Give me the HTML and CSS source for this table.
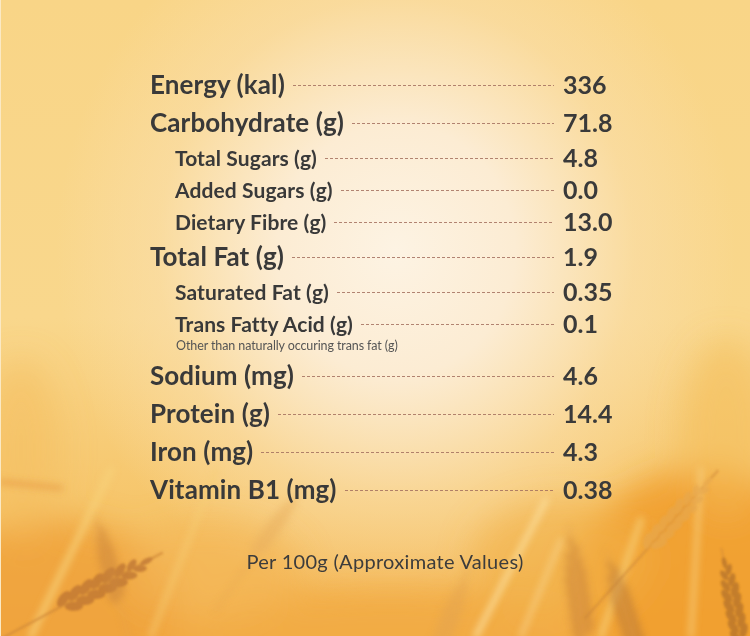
FILE: index.html
```html
<!DOCTYPE html>
<html lang="en">
<head>
<meta charset="utf-8">
<title>Nutrition Facts</title>
<link rel="stylesheet" href="styles.css">
</head>
<body>
<div class="panel">
  <svg class="wheat" viewBox="0 0 750 636" width="750" height="636" aria-hidden="true">
    <defs>
      <filter id="b1" x="-50%" y="-50%" width="200%" height="200%"><feGaussianBlur stdDeviation="1.3"/></filter>
      <filter id="b2" x="-50%" y="-50%" width="200%" height="200%"><feGaussianBlur stdDeviation="3.5"/></filter>
      <filter id="b3" x="-50%" y="-50%" width="200%" height="200%"><feGaussianBlur stdDeviation="16"/></filter>
      <g id="ear">
        <line x1="0" y1="80" x2="0" y2="-110" stroke="currentColor" stroke-width="2"/>
        <ellipse cx="-5" cy="-15" rx="4" ry="8" transform="rotate(-25 -5 -15)"/>
        <ellipse cx="5" cy="-20" rx="4" ry="8" transform="rotate(25 5 -20)"/>
        <ellipse cx="-5" cy="-26" rx="4" ry="8" transform="rotate(-25 -5 -26)"/>
        <ellipse cx="5" cy="-31" rx="4" ry="8" transform="rotate(25 5 -31)"/>
        <ellipse cx="-5" cy="-37" rx="4" ry="8" transform="rotate(-25 -5 -37)"/>
        <ellipse cx="5" cy="-42" rx="4" ry="8" transform="rotate(25 5 -42)"/>
        <ellipse cx="-5" cy="-48" rx="4" ry="8" transform="rotate(-25 -5 -48)"/>
        <ellipse cx="5" cy="-53" rx="4" ry="8" transform="rotate(25 5 -53)"/>
        <ellipse cx="-5" cy="-59" rx="4" ry="8" transform="rotate(-25 -5 -59)"/>
        <ellipse cx="5" cy="-64" rx="4" ry="8" transform="rotate(25 5 -64)"/>
        <ellipse cx="-4" cy="-70" rx="3.5" ry="7" transform="rotate(-25 -4 -70)"/>
        <ellipse cx="4" cy="-75" rx="3.5" ry="7" transform="rotate(25 4 -75)"/>
        <ellipse cx="-3" cy="-81" rx="3" ry="6" transform="rotate(-25 -3 -81)"/>
        <ellipse cx="3" cy="-86" rx="3" ry="6" transform="rotate(25 3 -86)"/>
        <ellipse cx="0" cy="-94" rx="2.5" ry="6"/>
      </g>
    </defs>
    <!-- warm glow masses -->
    <g filter="url(#b3)">
      <ellipse cx="50" cy="610" rx="130" ry="90" fill="#efa038" opacity="0.8"/>
      <ellipse cx="700" cy="590" rx="130" ry="120" fill="#f09c2c" opacity="0.85"/>
      <ellipse cx="390" cy="650" rx="230" ry="60" fill="#f1aa40" opacity="0.75"/>
      <ellipse cx="560" cy="560" rx="90" ry="60" fill="#f2b04a" opacity="0.6"/>
      <ellipse cx="210" cy="570" rx="90" ry="50" fill="#f3b656" opacity="0.6"/>
      <ellipse cx="725" cy="430" rx="45" ry="90" fill="#f4bb55" opacity="0.5"/>
      <ellipse cx="20" cy="450" rx="40" ry="90" fill="#f4bd5e" opacity="0.55"/>
    </g>
    <!-- stalk streaks -->
    <g filter="url(#b2)" stroke-linecap="round" fill="none">
      <path d="M30 636 L110 470" stroke="#f8d27a" stroke-width="6" opacity="0.8"/>
      <path d="M150 636 L215 470" stroke="#f7cf76" stroke-width="5" opacity="0.6"/>
      <path d="M475 636 L545 500" stroke="#fbe0a0" stroke-width="5" opacity="0.85"/>
      <path d="M520 636 L560 540" stroke="#fbe0a0" stroke-width="4" opacity="0.6"/>
      <path d="M600 636 L640 520" stroke="#f8d27a" stroke-width="6" opacity="0.7"/>
      <path d="M690 636 L700 470" stroke="#f9d890" stroke-width="5" opacity="0.6"/>
      <path d="M0 482 L60 488" stroke="#e4923a" stroke-width="5" opacity="0.6"/>
    </g>
    <!-- ears -->
    <g filter="url(#b1)" fill="#b87030" color="#d08a3a" opacity="0.7">
      <use href="#ear" transform="translate(50 612) rotate(62) scale(1.15)"/>
      <use href="#ear" transform="translate(640 556) rotate(42) scale(1.05)" fill="#e6a850" opacity="0.9"/>
      <use href="#ear" transform="translate(742 650) rotate(-12) scale(0.95)" fill="#9a5e26" opacity="0.75"/>
    </g>
    <g filter="url(#b2)" fill="#c8823a" color="#e0a050" opacity="0.55">
      <use href="#ear" transform="translate(585 650) rotate(-8) scale(1.15)"/>
      <use href="#ear" transform="translate(640 660) rotate(-18) scale(1.05)" fill="#b87838"/>
      <use href="#ear" transform="translate(250 560) rotate(35) scale(0.8)" fill="#e9b060"/>
      <use href="#ear" transform="translate(120 610) rotate(-15) scale(0.9)"/>
      <use href="#ear" transform="translate(430 670) rotate(20) scale(1)" fill="#e4a450"/>
    </g>
  </svg>

  <div class="content">
    <div class="table">
      <div class="row main"><span class="label">Energy (kal)</span><span class="dots"></span><span class="value">336</span></div>
      <div class="row main"><span class="label">Carbohydrate (g)</span><span class="dots"></span><span class="value">71.8</span></div>
      <div class="row sub"><span class="label">Total Sugars (g)</span><span class="dots"></span><span class="value">4.8</span></div>
      <div class="row sub"><span class="label">Added Sugars (g)</span><span class="dots"></span><span class="value">0.0</span></div>
      <div class="row sub"><span class="label">Dietary Fibre (g)</span><span class="dots"></span><span class="value">13.0</span></div>
      <div class="row main"><span class="label">Total Fat (g)</span><span class="dots"></span><span class="value">1.9</span></div>
      <div class="row sub"><span class="label">Saturated Fat (g)</span><span class="dots"></span><span class="value">0.35</span></div>
      <div class="row sub"><span class="label">Trans Fatty Acid (g)</span><span class="dots"></span><span class="value">0.1</span></div>
      <div class="note">Other than naturally occuring trans fat (g)</div>
      <div class="row main"><span class="label">Sodium (mg)</span><span class="dots"></span><span class="value">4.6</span></div>
      <div class="row main"><span class="label">Protein (g)</span><span class="dots"></span><span class="value">14.4</span></div>
      <div class="row main"><span class="label">Iron (mg)</span><span class="dots"></span><span class="value">4.3</span></div>
      <div class="row main"><span class="label">Vitamin B1 (mg)</span><span class="dots"></span><span class="value">0.38</span></div>
    </div>
    <p class="footnote">Per 100g (Approximate Values)</p>
  </div>
</div>
</body>
</html>
```

FILE: styles.css
```css
* { box-sizing: border-box; }

html, body {
  margin: 0;
  padding: 0;
  width: 750px;
  height: 636px;
  overflow: hidden;
}

body {
  font-family: Lato, "Open Sans", "Liberation Sans", sans-serif;
  color: #393939;
  background: #f8d282;
}

.panel {
  position: relative;
  width: 750px;
  height: 636px;
  overflow: hidden;
  border-left: 1px solid #fbe9c4;
  background:
    radial-gradient(ellipse 340px 360px at 395px 250px, #fdf3e3 0%, #fcecd3 35%, rgba(250, 222, 170, 0.6) 70%, rgba(248, 212, 136, 0) 100%),
    linear-gradient(to bottom, #f9d587 0%, #f9d78c 50%, #f6c56a 80%, #f3b250 100%);
}

.wheat {
  position: absolute;
  left: 0;
  top: 0;
  pointer-events: none;
}

.content {
  position: relative;
  display: flex;
  flex-direction: column;
  padding: 65px 0 0 149px;
}

.table {
  width: 464px;
  display: flex;
  flex-direction: column;
}

.row {
  display: flex;
  align-items: center;
}

.row.main {
  height: 38px;
  font-size: 26px;
  letter-spacing: 0.1px;
}

.row.sub {
  height: 32px;
  font-size: 21px;
  letter-spacing: 0.1px;
  padding-left: 25px;
}

.label {
  font-weight: 700;
  white-space: nowrap;
}

.dots {
  flex: 1;
  height: 1px;
  margin: 3px 9px 0 8px;
  background-image: repeating-linear-gradient(to right, #a4705f 0 3px, transparent 3px 5px);
  opacity: 0.85;
}

.value {
  width: 51px;
  font-size: 25px;
  font-weight: 700;
  letter-spacing: 0;
  white-space: nowrap;
  color: #3a3a3a;
}

.note {
  height: 17px;
  padding: 0 0 0 26px;
  font-size: 12.5px;
  line-height: 13px;
  color: #555;
  letter-spacing: -0.1px;
  margin-top: 0;
}

.footnote {
  margin: 42px 0 0 0;
  width: 470px;
  text-align: center;
  font-size: 20px;
  line-height: 22px;
  color: #3c3c3c;
  letter-spacing: 0.3px;
}
```
